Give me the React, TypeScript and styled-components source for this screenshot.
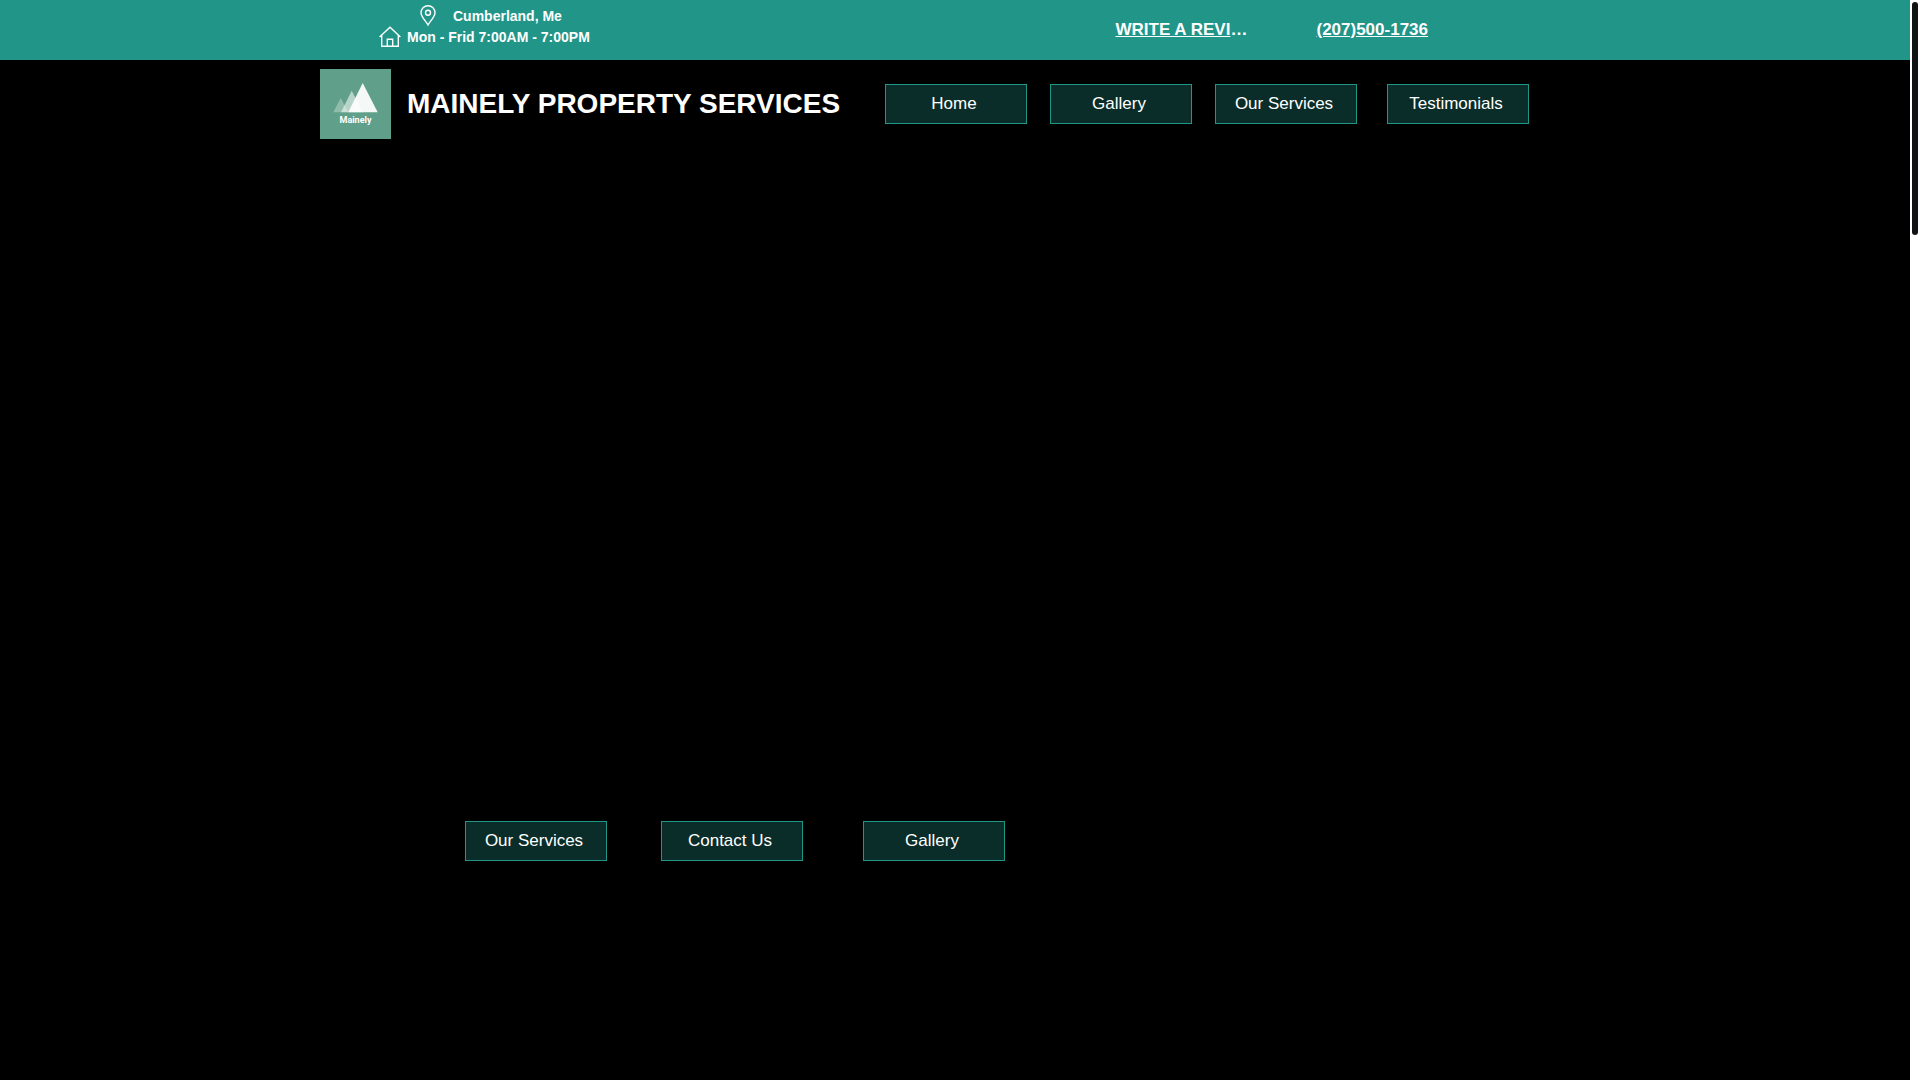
import React from "react";
import styled, { createGlobalStyle } from "styled-components";

const teal = "#209588";

const GlobalStyle = createGlobalStyle`
  * { box-sizing: border-box; }
  html, body { margin: 0; background: #000; }
  body { font-family: "Liberation Sans", Arial, sans-serif; color: #fff; }
`;

const Shell = styled.div`
  display: flex;
  min-height: 100vh;
  background: #000;
`;

const Page = styled.div`
  flex: 1;
  min-width: 0;
`;

const ScrollTrack = styled.div`
  flex: none;
  width: 10px;
  padding: 2px;
  background: #fff;
`;

const ScrollThumb = styled.div`
  height: 233px;
  border-radius: 3px;
  background: #111214;
`;

const Container = styled.div`
  display: flex;
  align-items: center;
  width: 100%;
  max-width: 1270px;
  margin: 0 auto;
`;

const TopBar = styled.div`
  background: ${teal};
`;

const TopInner = styled(Container)`
  justify-content: space-between;
  height: 60px;
  padding: 0 162px 0 59px;
`;

const Facts = styled.address`
  display: flex;
  flex-direction: column;
  padding-bottom: 6px;
  font-style: normal;
`;

const Fact = styled.div<{ $gap: number; $indent?: number }>`
  display: flex;
  align-items: center;
  gap: ${(p) => p.$gap}px;
  padding-left: ${(p) => p.$indent ?? 0}px;
  font-size: 14px;
  font-weight: 700;
  line-height: 21px;
  white-space: nowrap;
`;

const Glyph = styled.svg`
  display: block;
  flex: none;
  overflow: visible;
  fill: none;
  stroke: #fff;
`;

const TopLinks = styled.div`
  display: flex;
  gap: 66px;
`;

const TopLink = styled.a`
  display: block;
  max-width: 135px;
  overflow: hidden;
  text-overflow: ellipsis;
  white-space: nowrap;
  font-size: 17px;
  font-weight: 700;
  line-height: 24px;
  color: #fff;
  text-decoration: none;

  span { text-decoration: underline; }
`;

const Header = styled.header`
  background: #000;
`;

const HeaderInner = styled(Container)`
  height: 88px;
`;

const Logo = styled.svg`
  display: block;
  flex: none;
`;

const LogoText = styled.text`
  font-family: Roboto, sans-serif;
  font-size: 9px;
  font-weight: 700;
  fill: #fff;
`;

const Title = styled.h1`
  flex: 1;
  margin: 0 0 0 16px;
  font-size: 28px;
  font-weight: 700;
  line-height: 40px;
  white-space: nowrap;
`;

const Nav = styled.nav`
  display: flex;
  gap: 23px;
  margin-right: 61px;
`;

const ButtonLink = styled.a<{ $spaced?: number }>`
  display: flex;
  align-items: center;
  justify-content: center;
  width: 142px;
  height: 40px;
  padding-right: 4px;
  margin-left: ${(p) => p.$spaced ?? 0}px;
  border: 1px solid ${teal};
  background: #0a2d29;
  color: #fff;
  font-size: 17px;
  line-height: 24px;
  text-decoration: none;
  white-space: nowrap;
`;

const Hero = styled.section`
  max-width: 980px;
  margin: 0 auto;
  padding: 673px 0 60px;
`;

const HeroActions = styled.div`
  display: flex;
  gap: 54px;
`;

export default function App() {
  return (
    <>
      <GlobalStyle />
      <Shell>
        <Page>
          <TopBar>
            <TopInner>
              <Facts>
                <Fact $gap={17} $indent={41}>
                  <Glyph width="16" height="21" viewBox="0 1 16 21" strokeWidth="1.4" aria-hidden="true">
                    <path d="M8 20 C6 16 1 12 1 7.7 A7 7 0 0 1 15 7.7 C15 12 10 16 8 20 Z" />
                    <circle cx="8" cy="7.7" r="2.5" />
                  </Glyph>
                  <span>Cumberland, Me</span>
                </Fact>
                <Fact $gap={6}>
                  <Glyph width="22" height="21" viewBox="0 1 22 21" strokeWidth="1.4" aria-hidden="true">
                    <path d="M0.6 11 L11 1.2 L21.4 11 M2.7 9.5 V20.2 H19.3 V9.5 M8.3 20 V13.2 H13.7 V20" />
                  </Glyph>
                  <span>Mon - Frid 7:00AM - 7:00PM</span>
                </Fact>
              </Facts>
              <TopLinks>
                <TopLink href="#review"><span>WRITE A REVIEW</span></TopLink>
                <TopLink href="tel:2075001736"><span>(207)500-1736</span></TopLink>
              </TopLinks>
            </TopInner>
          </TopBar>
          <Header>
            <HeaderInner>
              <Logo width="71" height="70" viewBox="0 0 71 70" role="img" aria-label="Mainely">
                <rect width="71" height="70" fill="#609f89" />
                <path d="M20.7 29 L28.5 43.3 H13.3 Z" fill="#fff" opacity="0.3" />
                <path d="M31.7 21.7 L43 43.3 H21 Z" fill="#fff" opacity="0.55" />
                <path d="M42.7 14 L57.7 43.3 H28.3 Z" fill="#fff" opacity="0.93" />
                <LogoText x="35.5" y="54" textAnchor="middle">Mainely</LogoText>
              </Logo>
              <Title>MAINELY PROPERTY SERVICES</Title>
              <Nav>
                <ButtonLink href="#home">Home</ButtonLink>
                <ButtonLink href="#gallery">Gallery</ButtonLink>
                <ButtonLink href="#services">Our Services</ButtonLink>
                <ButtonLink href="#testimonials" $spaced={7}>Testimonials</ButtonLink>
              </Nav>
            </HeaderInner>
          </Header>
          <Hero>
            <HeroActions>
              <ButtonLink href="#services">Our Services</ButtonLink>
              <ButtonLink href="#contact">Contact Us</ButtonLink>
              <ButtonLink href="#gallery" $spaced={6}>Gallery</ButtonLink>
            </HeroActions>
          </Hero>
        </Page>
        <ScrollTrack aria-hidden="true">
          <ScrollThumb />
        </ScrollTrack>
      </Shell>
    </>
  );
}
